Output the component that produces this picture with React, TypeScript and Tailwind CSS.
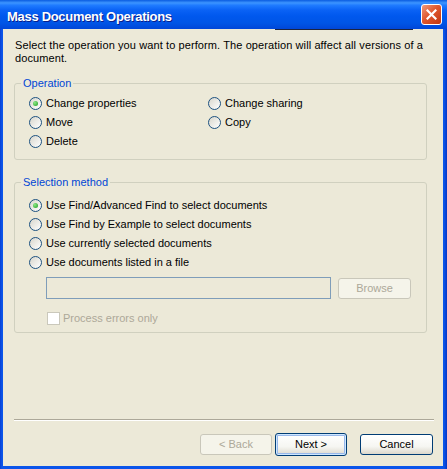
import React from "react"

const font = { fontFamily: '"Liberation Sans", Arial, sans-serif' }

function Radio({ checked = false }: { checked?: boolean }) {
  return (
    <span className="flex h-[13px] w-[13px] shrink-0 items-center justify-center rounded-full border border-[#1c5180] bg-[linear-gradient(135deg,#d8d6cc,#ffffff)]">
      {checked && (
        <span className="h-[5px] w-[5px] rounded-full bg-[radial-gradient(circle_at_35%_35%,#8ce888,#1f9d1f)]" />
      )}
    </span>
  )
}

function Option({ label, checked = false }: { label: string; checked?: boolean }) {
  return (
    <label className="flex h-[19px] items-center gap-[4px] whitespace-nowrap">
      <Radio checked={checked} />
      <span>{label}</span>
    </label>
  )
}

function XpButton({
  label,
  disabled = false,
  isDefault = false,
  className = "",
}: {
  label: string
  disabled?: boolean
  isDefault?: boolean
  className?: string
}) {
  if (disabled) {
    return (
      <button
        type="button"
        disabled
        className={`flex h-[21px] items-center justify-center rounded-[3px] border border-[#c9c7ba] bg-[#f5f4ea] text-[#aca899] ${className}`}
      >
        {label}
      </button>
    )
  }
  return (
    <button
      type="button"
      className={`flex items-center justify-center rounded-[3px] border border-[#003c74] bg-[linear-gradient(to_bottom,#ffffff_0%,#f6f6f2_60%,#dcd8cc_100%)] text-black ${
        isDefault ? "h-[23px] shadow-[inset_0_0_0_1px_#cee7ff,inset_0_0_0_2px_#98b8ea]" : "h-[21px]"
      } ${className}`}
    >
      {label}
    </button>
  )
}

export default function App() {
  return (
    <div
      className="flex h-[469px] w-[447px] flex-col bg-[linear-gradient(to_right,#0a3fd2,#0b55ea_2px,#0b55ea_calc(100%-3px),#0736c4)] text-[11px] leading-[13px] text-black"
      style={font}
    >
      {/* Title bar */}
      <div className="flex h-[29px] shrink-0 items-center justify-between bg-[linear-gradient(to_bottom,#0a5ce0_0%,#3d95ff_10%,#1f7bff_18%,#0a62f5_35%,#0058ee_55%,#0055e6_80%,#0046d8_100%)] pl-[7px] pr-[5px]">
        <span className="mt-[3px] text-[13px] font-bold tracking-[-0.3px] text-white [text-shadow:1px_1px_0_#0a1e8a]">
          Mass Document Operations
        </span>
        <span className="flex h-[21px] w-[21px] items-center justify-center rounded-[3px] border border-white bg-[linear-gradient(135deg,#f09a7c,#e0582e_45%,#c2360f)]">
          <svg width="11" height="11" viewBox="0 0 11 11">
            <path d="M1.5 1.5 L9.5 9.5 M9.5 1.5 L1.5 9.5" stroke="white" strokeWidth="2.2" strokeLinecap="square" />
          </svg>
        </span>
      </div>

      {/* Body */}
      <div className="mb-[3px] ml-[3px] mr-[4px] flex flex-1 flex-col bg-[#ece9d8]">
        <div className="ml-[272px] h-px w-[138px] bg-[#1c2440]" />

        <p className="mt-[9px] pl-[12px] leading-[13px] tracking-[0.1px]">
          Select the operation you want to perform. The operation will affect all versions of a
          <br />
          document.
        </p>

        <fieldset className="ml-[11px] mt-[12px] w-[413px] rounded-[3px] border border-[#d0d0bf] pb-[8px]">
          <legend className="ml-[6px] px-[2px] leading-[13px] text-[#0046d5]">Operation</legend>
          <div className="grid grid-cols-[179px_1fr] pl-[14px] pt-[4px]">
            <Option label="Change properties" checked />
            <Option label="Change sharing" />
            <Option label="Move" />
            <Option label="Copy" />
            <Option label="Delete" />
          </div>
        </fieldset>

        <fieldset className="ml-[11px] mt-[16px] w-[413px] rounded-[3px] border border-[#d0d0bf] pb-[7px]">
          <legend className="ml-[6px] px-[2px] leading-[13px] text-[#0046d5]">Selection method</legend>
          <div className="flex flex-col pl-[14px] pt-[7px]">
            <Option label="Use Find/Advanced Find to select documents" checked />
            <Option label="Use Find by Example to select documents" />
            <Option label="Use currently selected documents" />
            <Option label="Use documents listed in a file" />
          </div>
          <div className="mt-[5px] flex items-center gap-[7px] pl-[31px]">
            <div className="h-[22px] w-[285px] border border-[#7f9db9] bg-[#ece9d8]" />
            <XpButton label="Browse" disabled className="w-[73px]" />
          </div>
          <div className="mt-[13px] flex h-[13px] items-center gap-[3px] pl-[32px] text-[#aca899]">
            <span className="h-[13px] w-[13px] border border-[#cac8bb] bg-white" />
            <span>Process errors only</span>
          </div>
        </fieldset>

        <div className="flex-1" />

        <div className="ml-[11px] mr-[9px] border-b border-t border-b-white border-t-[#aca899]" />

        <div className="mb-[10px] mt-[12px] flex h-[23px] items-center justify-end pr-[10px]">
          <XpButton label="< Back" disabled className="w-[72px]" />
          <XpButton label="Next >" isDefault className="ml-[3px] w-[72px]" />
          <XpButton label="Cancel" className="ml-[13px] w-[73px]" />
        </div>
      </div>
    </div>
  )
}
